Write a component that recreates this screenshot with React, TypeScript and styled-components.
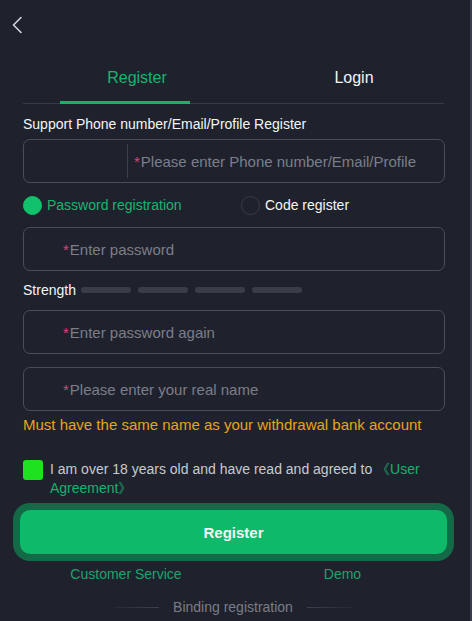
import React from "react";
import styled, { createGlobalStyle } from "styled-components";

const GlobalStyle = createGlobalStyle`
    * {
        box-sizing: border-box;
    }
    html,
    body {
        margin: 0;
        padding: 0;
        background-color: #1f222d;
    }
    body {
        font-family: "Liberation Sans", Arial, sans-serif;
    }
`;

const strengthLevels = [0, 1, 2, 3];

const fields = [
    { key: "password", placeholder: "Enter password" },
    { key: "again", placeholder: "Enter password again" },
    { key: "name", placeholder: "Please enter your real name" },
];

const App = () => {
    return (
        <Page>
            <GlobalStyle />
            <Header>
                <BackButton aria-label="back">
                    <svg width="12" height="18" viewBox="0 0 12 18">
                        <polyline
                            points="10,1.5 2.5,9 10,16.5"
                            fill="none"
                            stroke="#d3d5da"
                            strokeWidth="1.6"
                            strokeLinecap="round"
                            strokeLinejoin="round"
                        />
                    </svg>
                </BackButton>
            </Header>

            <Content>
                <Tabs>
                    <Tab $active $width={228}>
                        Register
                    </Tab>
                    <Tab $width={206}>Login</Tab>
                </Tabs>

                <Label>Support Phone number/Email/Profile Register</Label>
                <InputBox>
                    <Prefix />
                    <Placeholder $inset={6}>
                        <Star>*</Star>Please enter Phone number/Email/Profile
                    </Placeholder>
                </InputBox>

                <RadioRow>
                    <RadioItem $width={218}>
                        <RadioDot $checked />
                        <RadioText $checked>Password registration</RadioText>
                    </RadioItem>
                    <RadioItem>
                        <RadioDot />
                        <RadioText>Code register</RadioText>
                    </RadioItem>
                </RadioRow>

                <InputBox>
                    <Placeholder $inset={39}>
                        <Star>*</Star>
                        {fields[0].placeholder}
                    </Placeholder>
                </InputBox>

                <StrengthRow>
                    <StrengthLabel>Strength</StrengthLabel>
                    {strengthLevels.map((level) => (
                        <StrengthBar key={level} />
                    ))}
                </StrengthRow>

                <InputStack>
                    {fields.slice(1).map((field) => (
                        <InputBox key={field.key}>
                            <Placeholder $inset={39}>
                                <Star>*</Star>
                                {field.placeholder}
                            </Placeholder>
                        </InputBox>
                    ))}
                </InputStack>

                <Warning>
                    Must have the same name as your withdrawal bank account
                </Warning>

                <AgreeRow>
                    <CheckBox />
                    <AgreeText>
                        I am over 18 years old and have read and agreed to{" "}
                        <AgreeLink>《User Agreement》</AgreeLink>
                    </AgreeText>
                </AgreeRow>

                <SubmitButton>Register</SubmitButton>

                <LinkRow>
                    <TextLink>Customer Service</TextLink>
                    <TextLink>Demo</TextLink>
                </LinkRow>

                <Binding>
                    <BindingLine />
                    <BindingText>Binding registration</BindingText>
                    <BindingLine $flip />
                </Binding>
            </Content>
        </Page>
    );
};

const Page = styled.div`
    width: 472px;
    min-height: 621px;
    background-color: #1f222d;
    border-right: 2px solid #393d4b;
    overflow: hidden;
`;

const Header = styled.div`
    display: flex;
    align-items: center;
    height: 50px;
    padding-left: 11px;
`;

const BackButton = styled.button`
    display: flex;
    align-items: center;
    padding: 0;
    border: none;
    outline: none;
    background: transparent;
`;

const Content = styled.div`
    display: flex;
    flex-direction: column;
    padding: 0 25px 0 23px;
`;

const Tabs = styled.div`
    display: flex;
    border-bottom: 1px solid #363a46;
    margin-right: 1px;
`;

const Tab = styled.div<{ $active?: boolean; $width: number }>`
    position: relative;
    flex: none;
    width: ${({ $width }) => $width}px;
    padding: 18px 0 15px;
    text-align: center;
    font-size: 16px;
    line-height: 20px;
    color: ${({ $active }) => ($active ? "#17b56f" : "#f2f3f5")};

    &::after {
        content: "";
        display: ${({ $active }) => ($active ? "block" : "none")};
        position: absolute;
        left: 37px;
        bottom: -1px;
        width: 130px;
        height: 3px;
        background-color: #10b767;
    }
`;

const Label = styled.div`
    margin-top: 10px;
    font-size: 14px;
    line-height: 20px;
    color: #f4f5f7;
`;

const InputBox = styled.div`
    display: flex;
    align-items: center;
    height: 44px;
    margin-top: 5px;
    border: 1px solid #4a4e5a;
    border-radius: 7px;
`;

const Prefix = styled.div`
    width: 104px;
    height: 34px;
    border-right: 1px solid #3c3f4a;
`;

const Placeholder = styled.div<{ $inset: number }>`
    padding-left: ${({ $inset }) => $inset}px;
    font-size: 15px;
    color: #7b7e89;
    white-space: nowrap;
`;

const Star = styled.span`
    color: #d2457d;
    margin-right: 1px;
`;

const RadioRow = styled.div`
    display: flex;
    align-items: center;
    height: 20px;
    margin: 12px 0 7px;
`;

const RadioItem = styled.div<{ $width?: number }>`
    display: flex;
    align-items: center;
    gap: 5px;
    width: ${({ $width }) => ($width ? `${$width}px` : "auto")};
`;

const RadioDot = styled.span<{ $checked?: boolean }>`
    width: 19px;
    height: 19px;
    border-radius: 50%;
    background-color: ${({ $checked }) => ($checked ? "#12c16c" : "transparent")};
    border: 1px solid ${({ $checked }) => ($checked ? "#12c16c" : "#383b46")};
`;

const RadioText = styled.span<{ $checked?: boolean }>`
    font-size: 14px;
    color: ${({ $checked }) => ($checked ? "#16b670" : "#f4f5f7")};
`;

const StrengthRow = styled.div`
    display: flex;
    align-items: center;
    gap: 7px;
    height: 20px;
    margin-top: 9px;
`;

const StrengthLabel = styled.span`
    margin-right: -2px;
    font-size: 14px;
    color: #f4f5f7;
`;

const StrengthBar = styled.span`
    width: 50px;
    height: 6px;
    border-radius: 3px;
    background-color: #3a3d48;
`;

const InputStack = styled.div`
    display: flex;
    flex-direction: column;
    gap: 8px;
    margin-top: 5px;
`;

const Warning = styled.div`
    margin-top: 4px;
    font-size: 15px;
    line-height: 20px;
    color: #e8a31b;
    white-space: nowrap;
`;

const AgreeRow = styled.div`
    display: flex;
    align-items: flex-start;
    gap: 7px;
    margin-top: 25px;
`;

const CheckBox = styled.span`
    flex: none;
    width: 20px;
    height: 20px;
    border-radius: 3px;
    background-color: #1ee21f;
`;

const AgreeText = styled.div`
    font-size: 14px;
    line-height: 19px;
    color: #c8cad0;
    padding-right: 20px;
`;

const AgreeLink = styled.span`
    color: #17b16f;
`;

const SubmitButton = styled.button`
    height: 44px;
    margin: 12px -2px 0 -3px;
    border: none;
    outline: none;
    border-radius: 10px;
    background-color: #0eb96a;
    box-shadow: 0 0 0 7px #146a47;
    font-family: "Liberation Sans", Arial, sans-serif;
    font-size: 15px;
    font-weight: bold;
    color: #f3f6f4;
`;

const LinkRow = styled.div`
    display: grid;
    grid-template-columns: 1fr 1fr;
    margin-top: 10px;
    line-height: 20px;
`;

const TextLink = styled.span`
    text-align: center;
    font-size: 14px;
    color: #1aa56e;
    &:first-child {
        padding-right: 5px;
    }
    &:last-child {
        padding-left: 6px;
    }
`;

const Binding = styled.div`
    display: flex;
    align-items: center;
    justify-content: center;
    gap: 14px;
    margin-top: 13px;
    padding-right: 2px;
    line-height: 20px;
`;

const BindingLine = styled.span<{ $flip?: boolean }>`
    width: 45px;
    height: 1px;
    background: linear-gradient(
        ${({ $flip }) => ($flip ? "to left" : "to right")},
        rgba(70, 74, 86, 0.2),
        #3e4250
    );
`;

const BindingText = styled.span`
    font-size: 14px;
    color: #7a7d88;
`;

export default App;
